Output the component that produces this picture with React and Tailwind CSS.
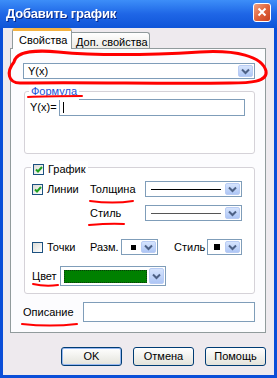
const Chevron = () => (
  <svg width="9" height="7" viewBox="0 0 9 7">
    <path d="M1 1.5 4.5 5 8 1.5" fill="none" stroke="#4d6185" strokeWidth="2" />
  </svg>
)

const DropBtn = ({ w = 'w-[15px]' }) => (
  <div className={`${w} h-full flex items-center justify-center rounded-[2px] border border-[#b9ccf4] bg-gradient-to-b from-[#d6e4fd] to-[#aec6f5]`}>
    <Chevron />
  </div>
)

const Check = ({ on }) => (
  <div className="w-[11px] h-[11px] border border-[#1c5180] bg-gradient-to-br from-[#dcdcd7] to-white flex items-center justify-center shrink-0">
    {on && (
      <svg width="8" height="7" viewBox="0 0 8 7">
        <path d="M1 3.5 3 5.5 7 1" fill="none" stroke="#21a121" strokeWidth="2" />
      </svg>
    )}
  </div>
)

const Combo = ({ className, children }) => (
  <div className={`flex border border-[#7f9db9] bg-white p-px ${className}`}>
    <div className="flex-1 flex items-center">{children}</div>
    <DropBtn />
  </div>
)

const Button = ({ children, def }) => (
  <button className={`w-[61px] h-[19px] rounded-[3px] border border-[#003c74] bg-gradient-to-b from-white to-[#e3e3db] text-[11px] ${def ? 'shadow-[inset_0_0_0_1px_#97b8f0]' : ''}`}>
    {children}
  </button>
)

export default function App() {
  return (
    <div className="relative w-[277px] h-[378px] flex flex-col bg-[#0a4ed8] text-[11px] text-black overflow-hidden" style={{ fontFamily: '"Liberation Sans", Arial, sans-serif' }}>
      {/* title bar */}
      <div className="h-[28px] shrink-0 flex items-center justify-between pl-[6px] pr-[6px] bg-gradient-to-b from-[#3d8ef8] via-[#1f66e6] to-[#0e55d8]">
        <span className="text-white font-bold text-[13px] tracking-[-0.2px] drop-shadow-[1px_1px_0_#0a2a8a]">Добавить график</span>
        <div className="w-[18px] h-[19px] mb-[4px] rounded-[3px] border border-white bg-gradient-to-br from-[#f0a080] via-[#e0643c] to-[#c8401e] flex items-center justify-center">
          <svg width="10" height="10" viewBox="0 0 10 10">
            <path d="M1.5 1.5 8.5 8.5M8.5 1.5 1.5 8.5" stroke="white" strokeWidth="2" />
          </svg>
        </div>
      </div>

      {/* body */}
      <div className="flex-1 mx-[3px] mb-[3px] bg-[#eeeaee] flex flex-col">
        {/* tabs */}
        <div className="relative z-10 flex items-end h-[21px] ml-[9px] -mb-px">
          <div className="w-[60px] h-[21px] bg-white border border-b-0 border-[#919b9c] border-t-[3px] border-t-[#f5b342] rounded-t-[3px] pl-[6px] pt-[1px]">Свойства</div>
          <div className="w-[78px] h-[16px] mb-px bg-gradient-to-b from-white to-[#ecebe6] border border-b-0 border-l-0 border-[#919b9c] rounded-tr-[3px] pl-[4px] pt-[1px]">Доп. свойства</div>
        </div>

        <div className="ml-[7px] w-[256px] h-[285px] border border-[#919b9c] bg-[#fcfcfe] flex flex-col">
          <Combo className="ml-[12px] mt-[14px] w-[232px] h-[16px]">
            <span className="pl-[3px]">Y(x)</span>
          </Combo>

          {/* Формула */}
          <div className="relative ml-[13px] mt-[12px] w-[231px] h-[63px] border border-[#d5d2d8] rounded-[3px] bg-white">
            <span className="absolute -top-[9px] left-[4px] px-[2px] bg-white text-[#1a50d8]">Формула</span>
            <div className="flex items-center mt-[7px] ml-[5px]">
              <span>Y(x)=</span>
              <div className="ml-[2px] w-[186px] h-[17px] border border-[#7f9db9] bg-white flex items-center pl-[3px]">
                <div className="w-px h-[11px] bg-black" />
              </div>
            </div>
          </div>

          {/* График */}
          <div className="relative ml-[13px] mt-[13px] w-[231px] h-[127px] border border-[#d5d2d8] rounded-[3px] bg-white flex flex-col pl-[7px] pt-[13px]">
            <div className="absolute -top-[7px] left-[6px] px-[2px] bg-white flex items-center gap-[4px]">
              <Check on />
              <span>График</span>
            </div>

            <div className="flex items-center h-[16px]">
              <div className="w-[58px] flex items-center gap-[4px]"><Check on /><span>Линии</span></div>
              <span className="w-[55px]">Толщина</span>
              <Combo className="w-[97px] h-[16px]">
                <div className="mx-[4px] flex-1 h-px bg-black" />
              </Combo>
            </div>

            <div className="flex items-center h-[16px] mt-[8px]">
              <div className="w-[58px]" />
              <span className="w-[55px]">Стиль</span>
              <Combo className="w-[97px] h-[16px]">
                <div className="mx-[4px] flex-1 h-px bg-[#555]" />
              </Combo>
            </div>

            <div className="flex items-center h-[16px] mt-[18px]">
              <div className="w-[58px] flex items-center gap-[4px]"><Check /><span>Точки</span></div>
              <span className="w-[31px]">Разм.</span>
              <Combo className="w-[37px] h-[16px]">
                <div className="ml-[8px] w-[5px] h-[5px] bg-black" />
              </Combo>
              <span className="ml-[16px] w-[33px]">Стиль</span>
              <Combo className="w-[35px] h-[16px]">
                <div className="ml-[5px] w-[6px] h-[6px] bg-black" />
              </Combo>
            </div>

            <div className="flex items-center h-[20px] mt-[11px]">
              <span className="w-[28px]">Цвет</span>
              <Combo className="w-[106px] h-[20px]">
                <div className="ml-[2px] mr-[2px] flex-1 h-[13px] bg-[#008000] border border-dotted border-[#0a3a0a]" />
              </Combo>
            </div>
          </div>

          {/* Описание */}
          <div className="flex items-center mt-[8px] ml-[12px]">
            <span className="w-[60px]">Описание</span>
            <div className="w-[172px] h-[20px] border border-[#7f9db9] bg-white" />
          </div>
        </div>

        {/* buttons */}
        <div className="flex justify-end gap-[11px] mt-[14px] mr-[8px]">
          <Button def>OK</Button>
          <Button>Отмена</Button>
          <Button>Помощь</Button>
        </div>
      </div>

      {/* red annotations */}
      <svg className="absolute inset-0 pointer-events-none" width="277" height="378" viewBox="0 0 277 378">
        <g fill="none" stroke="#ff0000" strokeLinecap="round">
          <path strokeWidth="3" d="M14 62 C16 51 38 50 58 52 C100 56 150 55 200 52 C236 50 262 56 266 71 C268 82 250 83 230 83 C160 84 90 82 20 83 C8 83 6 72 14 62 Z" />
          <path strokeWidth="2" d="M28 97 C45 96 65 96 82 96" />
          <path strokeWidth="2" d="M90 201 C105 203 120 203 133 201" />
          <path strokeWidth="2" d="M89 225 C100 224 112 223 124 224" />
          <path strokeWidth="2" d="M33 284 C42 286 50 286 58 285" />
          <path strokeWidth="2" d="M22 324 C40 326 60 326 77 324" />
        </g>
      </svg>
    </div>
  )
}
